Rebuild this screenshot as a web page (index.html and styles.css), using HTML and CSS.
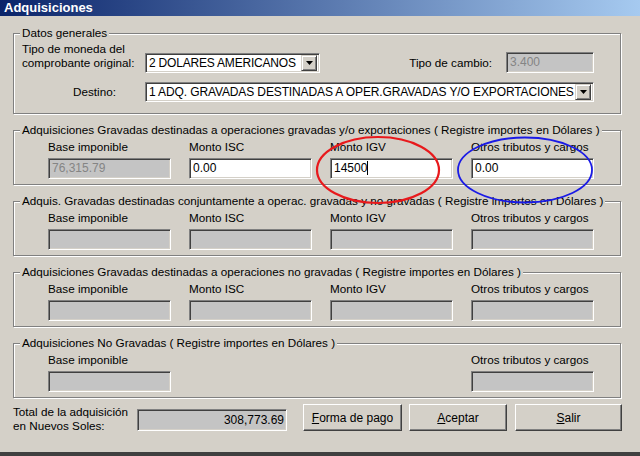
FILE: index.html
```html
<!DOCTYPE html>
<html lang="es">
<head>
<meta charset="utf-8">
<title>Adquisiciones</title>
<link rel="stylesheet" href="styles.css">
</head>
<body>
<div class="window">
  <div class="titlebar">Adquisiciones</div>
  <div class="client">
    <fieldset class="group general">
      <legend>Datos generales</legend>
      <div class="row row-moneda">
        <div class="lbl lbl-moneda">Tipo de moneda del<br>comprobante original:</div>
        <div class="combo combo-moneda">
          <span class="combo-text">2 DOLARES AMERICANOS</span>
          <span class="combo-btn"><svg width="7" height="4" viewBox="0 0 7 4"><path d="M0 0H7L3.5 4Z" fill="#000"/></svg></span>
        </div>
        <div class="cambio-wrap">
          <div class="lbl lbl-cambio">Tipo de cambio:</div>
          <div class="field disabled cambio">3.400</div>
        </div>
      </div>
      <div class="row row-destino">
        <div class="lbl lbl-destino">Destino:</div>
        <div class="combo combo-destino">
          <span class="combo-text">1 ADQ. GRAVADAS DESTINADAS A OPER.GRAVADAS Y/O EXPORTACIONES</span>
          <span class="combo-btn"><svg width="7" height="4" viewBox="0 0 7 4"><path d="M0 0H7L3.5 4Z" fill="#000"/></svg></span>
        </div>
      </div>
    </fieldset>

    <fieldset class="group amounts">
      <legend>Adquisiciones Gravadas destinadas a operaciones gravadas y/o exportaciones ( Registre importes en Dólares )</legend>
      <div class="grid">
        <div class="col"><div class="lbl">Base imponible</div><div class="field disabled">76,315.79</div></div>
        <div class="col"><div class="lbl">Monto ISC</div><div class="field">0.00</div></div>
        <div class="col"><div class="lbl">Monto IGV</div><div class="field">14500<span class="caret"></span></div></div>
        <div class="col"><div class="lbl">Otros tributos y cargos</div><div class="field">0.00</div></div>
      </div>
    </fieldset>

    <fieldset class="group amounts">
      <legend>Adquis. Gravadas destinadas conjuntamente a operac. gravadas y no gravadas ( Registre importes en Dólares )</legend>
      <div class="grid">
        <div class="col"><div class="lbl">Base imponible</div><div class="field disabled"></div></div>
        <div class="col"><div class="lbl">Monto ISC</div><div class="field disabled"></div></div>
        <div class="col"><div class="lbl">Monto IGV</div><div class="field disabled"></div></div>
        <div class="col"><div class="lbl">Otros tributos y cargos</div><div class="field disabled"></div></div>
      </div>
    </fieldset>

    <fieldset class="group amounts">
      <legend>Adquisiciones Gravadas destinadas a operaciones no gravadas ( Registre importes en Dólares )</legend>
      <div class="grid">
        <div class="col"><div class="lbl">Base imponible</div><div class="field disabled"></div></div>
        <div class="col"><div class="lbl">Monto ISC</div><div class="field disabled"></div></div>
        <div class="col"><div class="lbl">Monto IGV</div><div class="field disabled"></div></div>
        <div class="col"><div class="lbl">Otros tributos y cargos</div><div class="field disabled"></div></div>
      </div>
    </fieldset>

    <fieldset class="group amounts">
      <legend>Adquisiciones No Gravadas ( Registre importes en Dólares )</legend>
      <div class="grid">
        <div class="col"><div class="lbl">Base imponible</div><div class="field disabled"></div></div>
        <div class="col col-last"><div class="lbl">Otros tributos y cargos</div><div class="field disabled"></div></div>
      </div>
    </fieldset>

    <div class="footer">
      <div class="lbl total-lbl">Total de la adquisición<br>en Nuevos Soles:</div>
      <div class="field disabled total">308,773.69</div>
      <button class="btn btn-forma"><u>F</u>orma de pago</button>
      <button class="btn btn-aceptar"><u>A</u>ceptar</button>
      <button class="btn btn-salir"><u>S</u>alir</button>
    </div>
  </div>

  <svg class="annot" width="640" height="456" viewBox="0 0 640 456">
    <ellipse cx="378" cy="170" rx="61" ry="33" fill="none" stroke="#e8191c" stroke-width="2.2"/>
    <ellipse cx="525" cy="170" rx="67" ry="32.5" fill="none" stroke="#1a1ae6" stroke-width="1.8"/>
  </svg>
</div>
</body>
</html>
```

FILE: styles.css
```css
* { box-sizing: border-box; }
html, body { margin: 0; padding: 0; }
body {
  width: 640px;
  height: 456px;
  overflow: hidden;
  background: #d4d0c8;
  font-family: "Liberation Sans", Arial, sans-serif;
  font-size: 11.7px;
  color: #000;
}
.window {
  position: relative;
  width: 640px;
  height: 456px;
  background: #d4d0c8;
  border-bottom: 4px solid #404040;
  display: flex;
  flex-direction: column;
}
.titlebar {
  flex-shrink: 0;
  height: 16px;
  line-height: 16px;
  padding-left: 4px;
  font-size: 13px;
  font-weight: bold;
  color: #fff;
  background: linear-gradient(to right, #0a246a, #a6caf0);
}
.client {
  padding: 10px 19px 0 13px;
}
.group {
  margin: 9px 0 0 0;
  min-width: 0;
  border: 1px solid #808080;
  box-shadow: inset 1px 1px 0 #fff, 1px 1px 0 #fff;
  padding: 0 26px 5px 8px;
}
.group.general {
  margin-top: 0;
  padding-top: 2px;
  padding-bottom: 11px;
}
.group legend {
  margin-left: -2px;
  padding: 0 2px;
  line-height: 14px;
  background: #d4d0c8;
  white-space: nowrap;
}
.lbl {
  line-height: 14px;
  white-space: nowrap;
}
.row {
  display: flex;
  align-items: flex-end;
}
.row-moneda { min-height: 31px; }
.row-destino { margin-top: 9px; align-items: center; }
.lbl-moneda {
  align-self: flex-start;
  width: 123px;
  flex-shrink: 0;
}
.lbl-destino {
  width: 123px;
  flex-shrink: 0;
  padding-left: 51px;
}
.combo {
  display: flex;
  height: 20px;
  background: #fff;
  border: 1px solid;
  border-color: #808080 #fff #fff #808080;
  box-shadow: inset 1px 1px 0 #404040, inset -1px -1px 0 #d4d0c8;
  padding: 2px 2px 2px 3px;
  overflow: hidden;
  font-size: 12px;
}
.combo-moneda { width: 175px; flex-shrink: 0; }
.combo-destino { flex: 1; }
.combo-text {
  flex: 1;
  min-width: 0;
  overflow: hidden;
  white-space: nowrap;
  line-height: 14px;
}
.combo-moneda .combo-text { letter-spacing: -0.2px; }
.combo-destino .combo-text { letter-spacing: -0.12px; }
.combo-btn {
  flex-shrink: 0;
  width: 16px;
  height: 16px;
  margin-top: -1px;
  background: #d4d0c8;
  border: 1px solid;
  border-color: #d4d0c8 #404040 #404040 #d4d0c8;
  box-shadow: inset 1px 1px 0 #fff, inset -1px -1px 0 #808080;
  display: flex;
  align-items: center;
  justify-content: center;
}
.cambio-wrap {
  margin-left: auto;
  display: flex;
  align-items: center;
}
.lbl-cambio { margin-right: 14px; }
.field {
  height: 21px;
  background: #fff;
  border: 1px solid;
  border-color: #808080 #fff #fff #808080;
  box-shadow: inset 1px 1px 0 #404040, inset -1px -1px 0 #d4d0c8;
  padding: 0 3px;
  line-height: 19px;
  white-space: nowrap;
  overflow: hidden;
  font-size: 12px;
}
.field.disabled {
  background: #c4c4c4;
  color: #858585;
}
.cambio { width: 88px; }
.caret {
  display: inline-block;
  width: 1px;
  height: 14px;
  background: #000;
  vertical-align: -3px;
}
.grid {
  display: grid;
  grid-template-columns: repeat(4, 123px);
  column-gap: 18px;
  margin-left: 26px;
  padding-top: 3px;
}
.grid .lbl { margin-bottom: 4px; }
.col-last { grid-column: 4; }
.footer {
  display: flex;
  align-items: flex-start;
  margin-top: 6px;
}
.total-lbl {
  width: 124px;
  flex-shrink: 0;
  margin-top: 1px;
}
.field.disabled.total {
  width: 150px;
  height: 22px;
  flex-shrink: 0;
  margin-top: 5px;
  text-align: right;
  color: #000;
  line-height: 20px;
  padding-right: 2px;
}
.btn {
  flex-shrink: 0;
  height: 27px;
  margin: 0;
  padding: 0;
  font-family: inherit;
  font-size: 12px;
  color: #000;
  background: #d4d0c8;
  border: 1px solid;
  border-color: #fff #404040 #404040 #fff;
  box-shadow: inset -1px -1px 0 #808080;
}
.btn-forma { width: 99px; margin-left: 16px; }
.btn-aceptar { width: 98px; margin-left: 7px; }
.btn-salir { width: 107px; margin-left: 8px; }
.annot {
  position: absolute;
  left: 0;
  top: 0;
  pointer-events: none;
}
```
